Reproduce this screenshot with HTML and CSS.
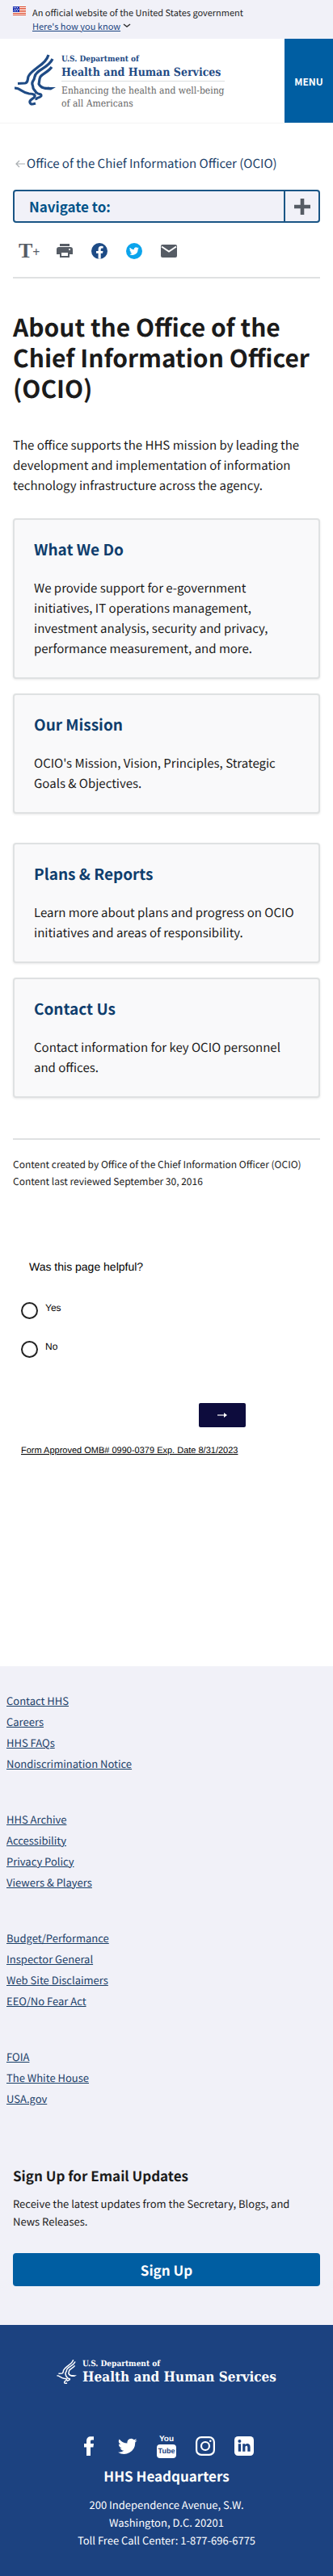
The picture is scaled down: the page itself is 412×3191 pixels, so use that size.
FILE: index.html
```html
<!DOCTYPE html>
<html lang="en">
<head>
<meta charset="utf-8">
<meta name="viewport" content="width=device-width, initial-scale=1">
<title>About the Office of the Chief Information Officer (OCIO)</title>
<link rel="stylesheet" href="styles.css">
</head>
<body>
<svg class="sprite" aria-hidden="true">
  <symbol id="bird" viewBox="0 0 52 64">
    <g fill="none" stroke="currentColor" stroke-linejoin="round">
      <path stroke-width="3.200" d="M5 36.500L14 36C18 35.500 17 31 18 28C20 23 25 20 30 16C36 12 41 8 43 1"/>
      <path stroke-width="3.200" d="M48 6C44 15 34 18 29 23C24 27 27 30 24 33C21 37 24 38 24 42C25 45 28 46 28 49"/>
      <path stroke-width="3.200" d="M47 16C43 22 36 24 33 28C31 32 32 34 31 37C33 41 38 43 44 42"/>
      <path stroke-width="3.200" d="M1 42C9 42 10 48 19 49C25 49 28 51 25 54C22 56 19 57 20 60C21 63 24 62 27 61"/>
      <path stroke-width="3" d="M28 47C29 51 35 48 34 52C32 55 27 53 28 57"/>
    </g>
    <path fill="currentColor" d="M38 41 52 41 46 44.500 38 44z"/>
  </symbol>
  <symbol id="bluebird" viewBox="0 0 24 24">
    <path fill="currentColor" d="M23.6 4.9a9.700 9.700 0 0 1-2.800.8 4.900 4.900 0 0 0 2.100-2.700 9.700 9.700 0 0 1-3.100 1.200 4.900 4.900 0 0 0-8.300 4.400A13.800 13.800 0 0 1 1.600 3.500a4.900 4.900 0 0 0 1.500 6.500 4.900 4.900 0 0 1-2.200-.6 4.900 4.900 0 0 0 3.900 4.800 4.900 4.900 0 0 1-2.200.1 4.900 4.900 0 0 0 4.600 3.400A9.800 9.800 0 0 1 0 19.700 13.800 13.800 0 0 0 21.200 7.400a9.800 9.800 0 0 0 2.400-2.500z"/>
  </symbol>
</svg>

<section class="banner" aria-label="Official website">
  <svg class="flag" viewBox="0 0 16 11" aria-hidden="true">
    <path fill="#fff" d="M0 0h16v11H0z"/>
    <path fill="#db3e1f" d="M8 0h8v1H8zM8 2h8v1H8zM8 4h8v1H8zM8 6h8v1H8zM0 8h16v1H0zM0 10h16v1H0z"/>
    <path fill="#1e33b1" d="M0 0h8v7H0z"/>
    <path stroke="#fff" stroke-dasharray="1 1" d="M1 1.500h6M2 3.500h5M1 5.500h6"/>
  </svg>
  <div>
    <p>An official website of the United States government</p>
    <button class="know" type="button"><span>Here's how you know</span><svg viewBox="0 0 10 8" aria-hidden="true"><path d="M1 2l4 3 4-3" fill="none" stroke="#333" stroke-width="1.500"/></svg></button>
  </div>
</section>

<header class="header">
  <a class="brand" href="#">
    <svg class="brand-bird" aria-hidden="true"><use href="#bird"/></svg>
    <span class="brand-text">
      <span class="dept">U.S. Department of</span>
      <span class="hhs">Health and Human Services</span>
      <span class="motto">Enhancing the health and well-being<br>of all Americans</span>
    </span>
  </a>
  <button class="menu" type="button">MENU</button>
</header>

<main class="main">
  <a class="crumb" href="#"><svg viewBox="0 0 12 10" aria-hidden="true"><path d="M12 5H1M5 1L1 5l4 4" fill="none" stroke="#a9aeb1" stroke-width="1.200"/></svg>Office of the Chief Information Officer (OCIO)</a>

  <button class="navigate" type="button" aria-expanded="false">
    <span class="navigate-label">Navigate to:</span>
    <span class="navigate-plus"><svg viewBox="0 0 20 20" aria-hidden="true"><path d="M10 0v20M0 10h20" stroke="#565c65" stroke-width="4.600"/></svg></span>
  </button>

  <div class="tools">
    <button type="button" class="resize" aria-label="Resize text"><span>T</span><small>+</small></button>
    <button type="button" aria-label="Print"><svg viewBox="0 0 20 20"><path fill="#565c65" d="M4 1h12v3H4zM3 5h14a3 3 0 0 1 3 3v6h-4v4H4v-4H0V8a3 3 0 0 1 3-3zm3 7v4h8v-4zm10-5a1 1 0 1 0 .1 0z" fill-rule="evenodd"/></svg></button>
    <a href="#" aria-label="Facebook"><svg viewBox="0 0 20 20"><circle cx="10" cy="10" r="10" fill="#1d4b86"/><path fill="#fff" d="M8.600 19.800v-7H6V10h2.600V7.800c0-2.600 1.500-4 3.800-4l2.200.2v2.500h-1.300c-1.200 0-1.600.7-1.600 1.500v2h2.800l-.5 2.800h-2.300v7z"/></svg></a>
    <a href="#" aria-label="Twitter"><svg viewBox="0 0 20 20"><circle cx="10" cy="10" r="10" fill="#0ba4ec"/><use href="#bluebird" x="4" y="4" width="12" height="12" color="#fff"/></svg></a>
    <a href="#" aria-label="Email"><svg viewBox="0 0 20 20"><path fill="#565c65" d="M2 2h16a2 2 0 0 1 2 2v12a2 2 0 0 1-2 2H2a2 2 0 0 1-2-2V4a2 2 0 0 1 2-2z"/><path d="M1 4.500l9 6 9-6" fill="none" stroke="#fff" stroke-width="2"/></svg></a>
  </div>

  <h1>About the Office of the Chief Information Officer (OCIO)</h1>
  <p class="intro">The office supports the HHS mission by leading the development and implementation of information technology infrastructure across the agency.</p>

  <div class="cards">
    <section class="card">
      <h2><a href="#">What We Do</a></h2>
      <p>We provide support for e-government initiatives, IT operations management, investment analysis, security and privacy, performance measurement, and more.</p>
    </section>
    <section class="card">
      <h2><a href="#">Our Mission</a></h2>
      <p>OCIO's Mission, Vision, Principles, Strategic Goals &amp; Objectives.</p>
    </section>
  </div>
  <div class="cards">
    <section class="card">
      <h2><a href="#">Plans &amp; Reports</a></h2>
      <p>Learn more about plans and progress on OCIO initiatives and areas of responsibility.</p>
    </section>
    <section class="card">
      <h2><a href="#">Contact Us</a></h2>
      <p>Contact information for key OCIO personnel and offices.</p>
    </section>
  </div>

  <div class="meta">
    <p>Content created by Office of the Chief Information Officer (OCIO)</p>
    <p>Content last reviewed September 30, 2016</p>
  </div>
</main>

<form class="survey">
  <fieldset>
    <legend>Was this page helpful?</legend>
    <label><input type="radio" name="helpful" value="yes"><span>Yes</span></label>
    <label><input type="radio" name="helpful" value="no"><span>No</span></label>
  </fieldset>
  <button class="next" type="button" aria-label="Next"><svg viewBox="0 0 12 6" aria-hidden="true"><path d="M0 3h10" stroke="#fff" stroke-width="1.200"/><path d="M8 0l4 3-4 3z" fill="#fff"/></svg></button>
  <a class="omb" href="#">Form Approved OMB# 0990-0379 Exp. Date 8/31/2023</a>
</form>

<footer>
  <div class="foot-links">
    <nav class="link-groups" aria-label="Footer">
      <ul>
        <li><a href="#">Contact HHS</a></li>
        <li><a href="#">Careers</a></li>
        <li><a href="#">HHS FAQs</a></li>
        <li><a href="#">Nondiscrimination Notice</a></li>
      </ul>
      <ul>
        <li><a href="#">HHS Archive</a></li>
        <li><a href="#">Accessibility</a></li>
        <li><a href="#">Privacy Policy</a></li>
        <li><a href="#">Viewers &amp; Players</a></li>
      </ul>
      <ul>
        <li><a href="#">Budget/Performance</a></li>
        <li><a href="#">Inspector General</a></li>
        <li><a href="#">Web Site Disclaimers</a></li>
        <li><a href="#">EEO/No Fear Act</a></li>
      </ul>
      <ul>
        <li><a href="#">FOIA</a></li>
        <li><a href="#">The White House</a></li>
        <li><a href="#">USA.gov</a></li>
      </ul>
    </nav>
    <section class="signup">
      <h2>Sign Up for Email Updates</h2>
      <p>Receive the latest updates from the Secretary, Blogs, and<br>News Releases.</p>
      <a class="signup-button" href="#">Sign Up</a>
    </section>
  </div>
  <div class="foot-id">
    <a class="foot-brand" href="#">
      <svg class="foot-bird" aria-hidden="true"><use href="#bird"/></svg>
      <span class="brand-text">
        <span class="dept">U.S. Department of</span>
        <span class="hhs">Health and Human Services</span>
      </span>
    </a>
    <div class="social">
      <a href="#" aria-label="Facebook"><svg viewBox="0 0 24 24"><path fill="#fff" d="M9 24V13.500H6V9h3V6c0-4 2-5.800 5.300-5.800H18V4.500h-2.300C14.300 4.500 14 5.300 14 6.500V9h4l-.6 4.500H14V24z"/></svg></a>
      <a href="#" aria-label="Twitter"><svg viewBox="0 0 24 24" color="#fff"><use href="#bluebird"/></svg></a>
      <a class="youtube" href="#" aria-label="YouTube"><span>You</span><span class="tube">Tube</span></a>
      <a href="#" aria-label="Instagram"><svg viewBox="0 0 24 24" fill="none" stroke="#fff" stroke-width="2.200"><rect x="1.100" y="1.100" width="21.800" height="21.800" rx="6"/><circle cx="12" cy="12" r="5"/><circle cx="18.300" cy="5.700" r="1.300" fill="#fff" stroke="none"/></svg></a>
      <a href="#" aria-label="LinkedIn"><svg viewBox="0 0 24 24"><rect width="24" height="24" rx="4.500" fill="#fff"/><circle cx="6.400" cy="6" r="2" fill="#1c4280"/><path fill="#1c4280" d="M4.800 9.300h3.300v9.500H4.800zM10.200 9.300h3.100v1.300c1.700-2.500 6.300-2.100 6.300 2.600v5.600h-3.300v-5.200c0-2.600-2.900-2.300-2.900 0v5.200h-3.200z"/></svg></a>
    </div>
    <h2>HHS Headquarters</h2>
    <address>200 Independence Avenue, S.W.<br>Washington, D.C. 20201<br>Toll Free Call Center: 1-877-696-6775</address>
  </div>
</footer>
</body>
</html>
```
FILE: styles.css
```css
* { box-sizing: border-box; }
body {
  margin: 0;
  background: #fff;
  color: #1b1b1b;
  font-family: "Noto Sans CJK SC", "Noto Sans", sans-serif;
  font-size: 15px;
  line-height: 25px;
  text-rendering: geometricPrecision;
}
h1, h2, p, ul, fieldset { margin: 0; padding: 0; }
ul { list-style: none; }
button { font: inherit; color: inherit; background: none; border: 0; padding: 0; cursor: pointer; }
svg { display: block; }
a { color: #1a4068; }
.sprite { position: absolute; width: 0; height: 0; }

.banner { display: flex; gap: 8px; padding: 8px 16px; background: #f1f1f8; font-size: 11px; line-height: 16px; }
.flag { width: 16px; height: 11px; }
.know { display: flex; align-items: center; gap: 3px; color: #1a4480; }
.know span { text-decoration: underline; }
.know svg { width: 10px; height: 8px; }

.header { display: flex; justify-content: space-between; min-height: 105px; border-bottom: 1px solid #f4f4f4; }
.brand { display: flex; gap: 7px; padding: 19px 0 0 17px; text-decoration: none; }
.brand-bird { width: 52px; height: 64px; color: #1f4b85; }
.brand-text { display: block; font-family: "DejaVu Serif Condensed", "DejaVu Serif", serif; }
.dept, .hhs, .motto { display: block; white-space: nowrap; }
.dept { font-weight: 700; font-size: 10px; line-height: 13px; }
.hhs { font-weight: 700; font-size: 14px; line-height: 20px; }
.header .dept, .header .hhs { color: #1f4b85; }
.header .hhs { border-bottom: 1px solid #dcdee0; }
.motto { color: #666; font-size: 12px; line-height: 16px; padding-top: 3px; }
.menu { width: 60px; background: #005ea2; color: #fff; font-weight: 700; font-size: 12px; }

.main { padding: 37px 16px 0; }
.crumb { display: flex; align-items: center; gap: 2px; padding-left: 3px; text-decoration: none; }
.crumb svg { width: 12px; height: 10px; }
.navigate { display: flex; width: 100%; height: 41px; margin-top: 20px; border: 2px solid #1a5585; border-radius: 4px; background: #f1f1f8; }
.navigate-label { flex: 1; align-self: center; padding-left: 18px; text-align: left; color: #005288; font-weight: 700; font-size: 17px; }
.navigate-plus { display: grid; place-items: center; width: 43px; height: 37px; border-left: 2px solid #1a5585; }
.navigate-plus svg { width: 20px; height: 20px; }
.tools { display: flex; gap: 23px; align-items: center; height: 69px; padding: 3px 0 0 7px; border-bottom: 2px solid #dfe1e2; }
.tools svg { width: 20px; height: 20px; }
.resize { display: flex; width: 24px; color: #565c65; font-family: "Liberation Serif", serif; font-weight: 700; font-size: 26px; }
.resize small { font-size: 16px; padding-top: 2px; }

h1 { margin-top: 40px; font-size: 30px; line-height: 38px; }
.intro { margin-top: 40px; }
.cards { display: grid; gap: 18px; margin-top: 28px; }
.cards + .cards { margin-top: 36px; }
.card { padding: 23px 24px; border: 2px solid #dfe1e2; border-radius: 4px; background: #f9f9fa; box-shadow: 0 1px 3px #e8e8e8; }
.card h2 { font-size: 19px; line-height: 28px; }
.card h2 a { color: #0f3e6d; text-decoration: none; }
.card p { margin-top: 21px; }
.meta { margin-top: 50px; padding-top: 20px; border-top: 2px solid #dfe1e2; font-size: 12px; line-height: 21px; }

.survey { display: flex; flex-direction: column; align-items: flex-start; padding: 85px 26px 0; color: #000; font-family: "Liberation Sans", Arial, sans-serif; }
.survey fieldset { border: 0; }
.survey legend { padding: 0 0 34px 10px; font-size: 14px; line-height: 20px; }
.survey label { display: flex; gap: 9px; height: 48px; font-size: 12px; line-height: 14px; }
.survey input { appearance: none; width: 21px; height: 21px; margin: 0; border: 2px solid #222; border-radius: 50%; }
.next { display: grid; place-items: center; width: 58px; height: 30px; margin: 29px 0 0 220px; border-radius: 2px; background: #0d0c3d; }
.next svg { width: 12px; height: 6px; }
.omb { margin-top: 20px; color: #000; font-size: 11px; line-height: 18px; }

.foot-links { margin-top: 258px; padding: 30px 0 48px; background: #f1f1f8; }
.link-groups { display: grid; gap: 43px; padding-left: 8px; font-size: 13px; line-height: 26px; }
.signup { padding: 70px 16px 0; font-size: 13px; line-height: 22px; }
.signup h2 { font-size: 17px; line-height: 24px; }
.signup p { margin-top: 12px; }
.signup-button { display: block; margin-top: 28px; border-radius: 4px; background: #005ea2; color: #fff; font-weight: 700; font-size: 17px; line-height: 41px; text-align: center; text-decoration: none; }
.foot-id { display: flex; flex-direction: column; align-items: center; padding: 42px 16px 33px; background: #1c4280; color: #fff; text-align: center; }
.foot-brand { display: flex; gap: 7px; color: #fff; text-align: left; text-decoration: none; }
.foot-bird { width: 25px; height: 32px; }
.foot-brand .hhs { font-size: 17px; }
.social { display: flex; gap: 24px; align-items: center; margin-top: 60px; }
.social svg { width: 24px; height: 24px; }
.youtube { display: block; width: 24px; color: #fff; font-family: "Liberation Sans Narrow", "Liberation Sans", sans-serif; font-weight: 700; font-size: 10px; line-height: 13px; text-decoration: none; }
.youtube span { display: block; }
.youtube .tube { padding: 2px 0; border-radius: 4px; background: #fff; color: #1c4280; font-size: 9px; }
.foot-id h2 { margin-top: 10px; font-size: 17px; line-height: 24px; }
address { margin-top: 13px; font-size: 13px; line-height: 22px; font-style: normal; }
```
